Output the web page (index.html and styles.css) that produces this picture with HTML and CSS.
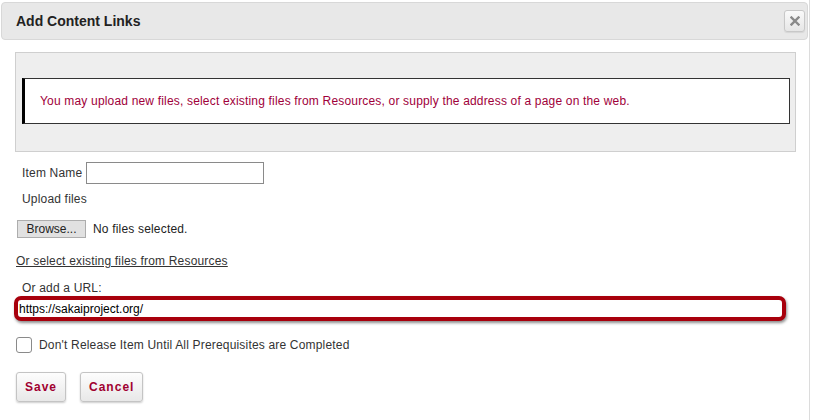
FILE: index.html
```html
<!DOCTYPE html>
<html>
<head>
<meta charset="utf-8">
<link rel="stylesheet" href="styles.css">
</head>
<body>
<div class="dialog">
  <div class="titlebar">
    <span class="title">Add Content Links</span>
    <button class="close" type="button" aria-label="close">
      <svg width="10" height="10" viewBox="0 0 10 10"><path d="M1.5 1.5 L8.5 8.5 M8.5 1.5 L1.5 8.5" stroke="#8a8a8a" stroke-width="2.4" stroke-linecap="square"/></svg>
    </button>
  </div>
  <div class="content">
    <div class="panel">
      <div class="notice">You may upload new files, select existing files from Resources, or supply the address of a page on the web.</div>
    </div>
    <div class="row name-row">
      <label class="lbl">Item Name</label>
      <input class="text-input" type="text">
    </div>
    <div class="row lbl upload-lbl">Upload files</div>
    <div class="row file-row">
      <button class="browse" type="button">Browse...</button>
      <span class="nofiles">No files selected.</span>
    </div>
    <div class="row link-row"><a class="link" href="#">Or select existing files from Resources</a></div>
    <div class="row lbl url-lbl">Or add a URL:</div>
    <div class="url-wrap"><input class="url-input" type="text" value="https://sakaiproject.org/"></div>
    <div class="row check-row">
      <span class="checkbox"></span>
      <span class="check-lbl">Don't Release Item Until All Prerequisites are Completed</span>
    </div>
    <div class="buttons">
      <button class="btn" type="button">Save</button>
      <button class="btn" type="button">Cancel</button>
    </div>
  </div>
</div>
</body>
</html>
```
FILE: styles.css
```css
html, body {
  margin: 0;
  padding: 0;
  background: #fff;
  font-family: "Liberation Sans", Arial, sans-serif;
  font-size: 12px;
  letter-spacing: 0.18px;
  color: #333;
}
.dialog {
  width: 810px;
  height: 420px;
  border-right: 1px solid #dcdcdc;
  box-sizing: border-box;
  padding: 2px 0 0 1px;
}
.titlebar {
  height: 36px;
  margin-right: 1px;
  background: #e8e8e8;
  border: 1px solid #d8d8d8;
  border-radius: 4px;
  display: flex;
  align-items: center;
  justify-content: space-between;
  padding: 0 2px 0 14px;
}
.title {
  font-weight: bold;
  font-size: 14px;
  letter-spacing: 0;
  color: #222;
}
.close {
  width: 21px;
  height: 22px;
  padding: 0;
  border: 1px solid #c8c8c8;
  border-radius: 3px;
  background: linear-gradient(#fafafa, #e6e6e6);
  display: flex;
  align-items: center;
  justify-content: center;
  box-shadow: 0 1px 1px rgba(0,0,0,0.08);
}
.content {
  padding: 12px 0 0 0;
}
.panel {
  margin-left: 14px;
  width: 781px;
  box-sizing: border-box;
  height: 100px;
  background: #eee;
  border: 1px solid #cfcfcf;
  padding: 25px 5px 0 6px;
}
.notice {
  background: #fff;
  border: 1px solid #333;
  border-left: 3px solid #000;
  height: 46px;
  box-sizing: border-box;
  display: flex;
  align-items: center;
  padding-left: 15px;
  color: #a0003a;
  font-size: 12px;
}
.row {
  display: flex;
  align-items: center;
}
.lbl {
  color: #333;
}
.name-row {
  margin: 10px 0 0 21px;
  height: 22px;
}
.name-row .lbl { margin-right: 4px; }
.text-input {
  width: 178px;
  height: 22px;
  box-sizing: border-box;
  border: 1px solid #8a8a8a;
  padding: 1px 3px;
  font: inherit;
}
.upload-lbl {
  margin: 7px 0 0 21px;
  height: 16px;
}
.file-row {
  margin: 13px 0 0 16px;
  height: 18px;
}
.browse {
  height: 18px;
  width: 69px;
  box-sizing: border-box;
  border: 1px solid #adadad;
  background: #e1e1e1;
  font: inherit;
  color: #222;
  padding: 0;
}
.nofiles {
  margin-left: 7px;
  color: #222;
}
.link-row {
  margin: 15px 0 0 15px;
  height: 16px;
}
.link {
  color: #333;
  text-decoration: underline;
}
.url-lbl {
  margin: 11px 0 0 21px;
  height: 16px;
}
.url-wrap {
  margin: 0 0 0 13px;
  width: 772px;
  height: 25px;
  box-sizing: border-box;
  border: 4px solid #a8000c;
  border-radius: 7px;
  box-shadow: 1px 2px 3px rgba(0,0,0,0.45);
  display: flex;
  align-items: center;
  background: #fff;
}
.url-input {
  width: 100%;
  border: none;
  outline: none;
  padding: 0 0 0 1px;
  font: inherit;
  color: #000;
  background: transparent;
  height: 16px;
}
.check-row {
  margin: 16px 0 0 15px;
  height: 16px;
}
.checkbox {
  width: 14px;
  height: 14px;
  border: 1px solid #8a8a8a;
  border-radius: 3px;
  background: #fff;
  display: inline-block;
}
.check-lbl {
  margin-left: 7px;
  color: #333;
}
.buttons {
  margin: 19px 0 0 15px;
  display: flex;
  gap: 14px;
}
.btn {
  height: 30px;
  box-sizing: border-box;
  border: 1px solid #c4c4c4;
  border-radius: 3px;
  background: linear-gradient(#fdfdfd, #e8e8e8);
  box-shadow: 0 1px 2px rgba(0,0,0,0.2);
  color: #a00030;
  font: bold 12px "Liberation Sans", Arial, sans-serif;
  letter-spacing: 1px;
  padding: 0 8px;
}
```
